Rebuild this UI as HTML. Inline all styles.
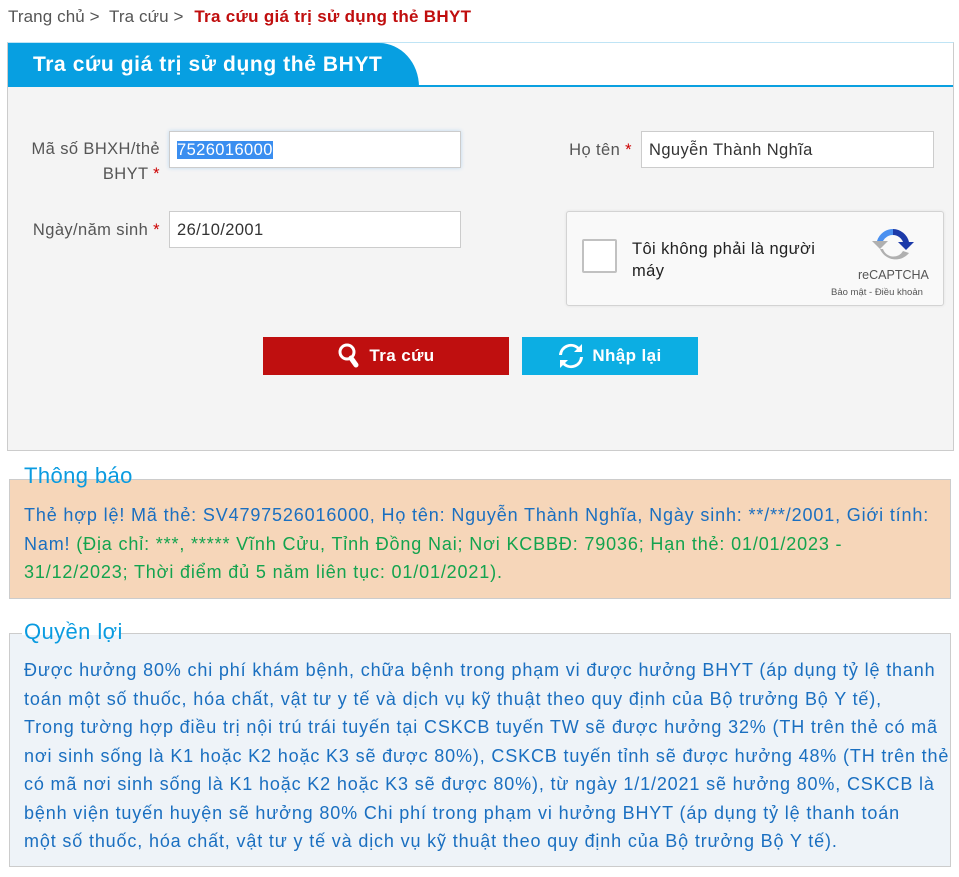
<!DOCTYPE html>
<html><head><meta charset="utf-8"><style>
*{box-sizing:border-box;margin:0;padding:0}
body{width:959px;height:877px;background:#fff;font-family:"Liberation Sans",sans-serif;position:relative;overflow:hidden;color:#333;letter-spacing:0.4px}
.a{position:absolute}
.bc{left:8px;top:7px;font-size:17px;color:#555;white-space:nowrap;letter-spacing:0.1px}
.bc b{color:#c00e0e;margin-left:6px;letter-spacing:0.3px}
.panel{left:7px;top:42px;width:947px;height:409px;background:#f4f4f4;border:1px solid #ccc;border-top:1px solid #bfe4f5}
.head{left:8px;top:43px;width:945px;height:44px;background:#fff;border-bottom:2px solid #0aa0e0}
.tab{left:8px;top:43px;width:411px;height:44px;background:#079fe1;border-top-right-radius:40px 44px;color:#fff;font-weight:bold;font-size:21px;padding:10px 0 0 25px;letter-spacing:0.6px;white-space:nowrap}
.lbl{font-size:16.5px;color:#555;text-align:right;line-height:25px;white-space:nowrap}
.star{color:#c00;}
.inp{background:#fff;border:1px solid #ccc;height:37px;font-size:16.5px;padding:9px 7px;color:#333}
.btn{height:38px;color:#fff;font-weight:bold;font-size:17px;display:flex;align-items:center;justify-content:center;gap:8px}
.box{font-size:18px;line-height:28.5px;padding:0 14px;white-space:nowrap;letter-spacing:0.85px}
.leg{font-size:22px;color:#0a9be0;padding:0 2px}
</style></head><body>
<div class="a bc">Trang chủ &gt;&nbsp; Tra cứu &gt; <b>Tra cứu giá trị sử dụng thẻ BHYT</b></div>
<div class="a panel"></div>
<div class="a head"></div>
<div class="a tab">Tra cứu giá trị sử dụng thẻ BHYT</div>

<div class="a lbl" style="left:10px;top:137px;width:150px">Mã số BHXH/thẻ<br>BHYT <span class="star">*</span></div>
<div class="a inp" style="left:169px;top:131px;width:292px;box-shadow:0 0 4px #bcd8f0"><span style="background:#3a8ef0;color:#fff">7526016000</span></div>
<div class="a lbl" style="left:10px;top:218px;width:150px">Ngày/năm sinh <span class="star">*</span></div>
<div class="a inp" style="left:169px;top:211px;width:292px">26/10/2001</div>
<div class="a lbl" style="left:540px;top:138px;width:92px">Họ tên <span class="star">*</span></div>
<div class="a inp" style="left:641px;top:131px;width:293px">Nguyễn Thành Nghĩa</div>

<div class="a" style="left:566px;top:211px;width:378px;height:95px;background:#f9f9f9;border:1px solid #d3d3d3;border-radius:3px;box-shadow:0 0 3px rgba(0,0,0,.08)"></div>
<div class="a" style="left:582px;top:239px;width:35px;height:34px;background:#fff;border:2px solid #c1c1c1;border-radius:2px"></div>
<div class="a" style="left:632px;top:238px;font-size:16.5px;color:#222;line-height:22px">Tôi không phải là người<br>máy</div>
<svg class="a" style="left:872px;top:225px" width="42" height="42" viewBox="0 0 42 42">
<path d="M21 4A17 17 0 0 0 5 16l6 0A11 11 0 0 1 21 10z" fill="#4a90f0"/>
<path d="M21 4A17 17 0 0 1 37 17l5 0-8 8-8-8 5 0A11 11 0 0 0 21 10z" fill="#1c3aa9"/>
<path d="M5 16l-5 0 8 8 8-8-5 0zM8 24A17 17 0 0 0 37 28l-6-2A11 11 0 0 1 11 24z" fill="#b0b0b0"/>
</svg>
<div class="a" style="left:858px;top:268px;font-size:12.5px;color:#555;letter-spacing:0">reCAPTCHA</div>
<div class="a" style="left:831px;top:287px;font-size:9.5px;color:#555;letter-spacing:0">Bảo mật - Điều khoản</div>

<div class="a btn" style="left:263px;top:337px;width:246px;background:#bf0f0f">
<svg width="24" height="28" viewBox="0 0 24 28"><circle cx="10" cy="10" r="7" fill="none" stroke="#fff" stroke-width="3"/><path d="M14 16l5 7" stroke="#fff" stroke-width="5" stroke-linecap="round"/></svg>Tra cứu</div>
<div class="a btn" style="left:522px;top:337px;width:176px;background:#0caee3">
<svg width="26" height="26" viewBox="0 0 26 26"><path d="M4 12A9 9 0 0 1 19 6l-3 3h8V1l-3 3A12 12 0 0 0 1 12z" fill="#fff"/><path d="M22 14A9 9 0 0 1 7 20l3-3H2v8l3-3a12 12 0 0 0 20-8z" fill="#fff"/></svg>Nhập lại</div>

<div class="a" style="left:9px;top:479px;width:942px;height:120px;background:#f6d6b9;border:1px solid #ccc"></div>
<div class="a leg" style="left:22px;top:463px">Thông báo</div>
<div class="a box" style="left:10px;top:501px;width:940px;color:#1a6fc0">Thẻ hợp lệ! Mã thẻ: SV4797526016000, Họ tên: Nguyễn Thành Nghĩa, Ngày sinh: **/**/2001, Giới tính:<br>Nam! <span style="color:#13a34e">(Địa chỉ: ***, ***** Vĩnh Cửu, Tỉnh Đồng Nai; Nơi KCBBĐ: 79036; Hạn thẻ: 01/01/2023 -<br>31/12/2023; Thời điểm đủ 5 năm liên tục: 01/01/2021).</span></div>

<div class="a" style="left:9px;top:633px;width:942px;height:234px;background:#eef3f8;border:1px solid #ccc"></div>
<div class="a" style="left:22px;top:631px;width:98px;height:4px;background:#fff"></div>
<div class="a leg" style="left:22px;top:619px">Quyền lợi</div>
<div class="a box" style="left:10px;top:656px;width:940px;color:#1a6fc0">Được hưởng 80% chi phí khám bệnh, chữa bệnh trong phạm vi được hưởng BHYT (áp dụng tỷ lệ thanh<br>toán một số thuốc, hóa chất, vật tư y tế và dịch vụ kỹ thuật theo quy định của Bộ trưởng Bộ Y tế),<br>Trong tường hợp điều trị nội trú trái tuyến tại CSKCB tuyến TW sẽ được hưởng 32% (TH trên thẻ có mã<br>nơi sinh sống là K1 hoặc K2 hoặc K3 sẽ được 80%), CSKCB tuyến tỉnh sẽ được hưởng 48% (TH trên thẻ<br>có mã nơi sinh sống là K1 hoặc K2 hoặc K3 sẽ được 80%), từ ngày 1/1/2021 sẽ hưởng 80%, CSKCB là<br>bệnh viện tuyến huyện sẽ hưởng 80% Chi phí trong phạm vi hưởng BHYT (áp dụng tỷ lệ thanh toán<br>một số thuốc, hóa chất, vật tư y tế và dịch vụ kỹ thuật theo quy định của Bộ trưởng Bộ Y tế).</div>
</body></html>
